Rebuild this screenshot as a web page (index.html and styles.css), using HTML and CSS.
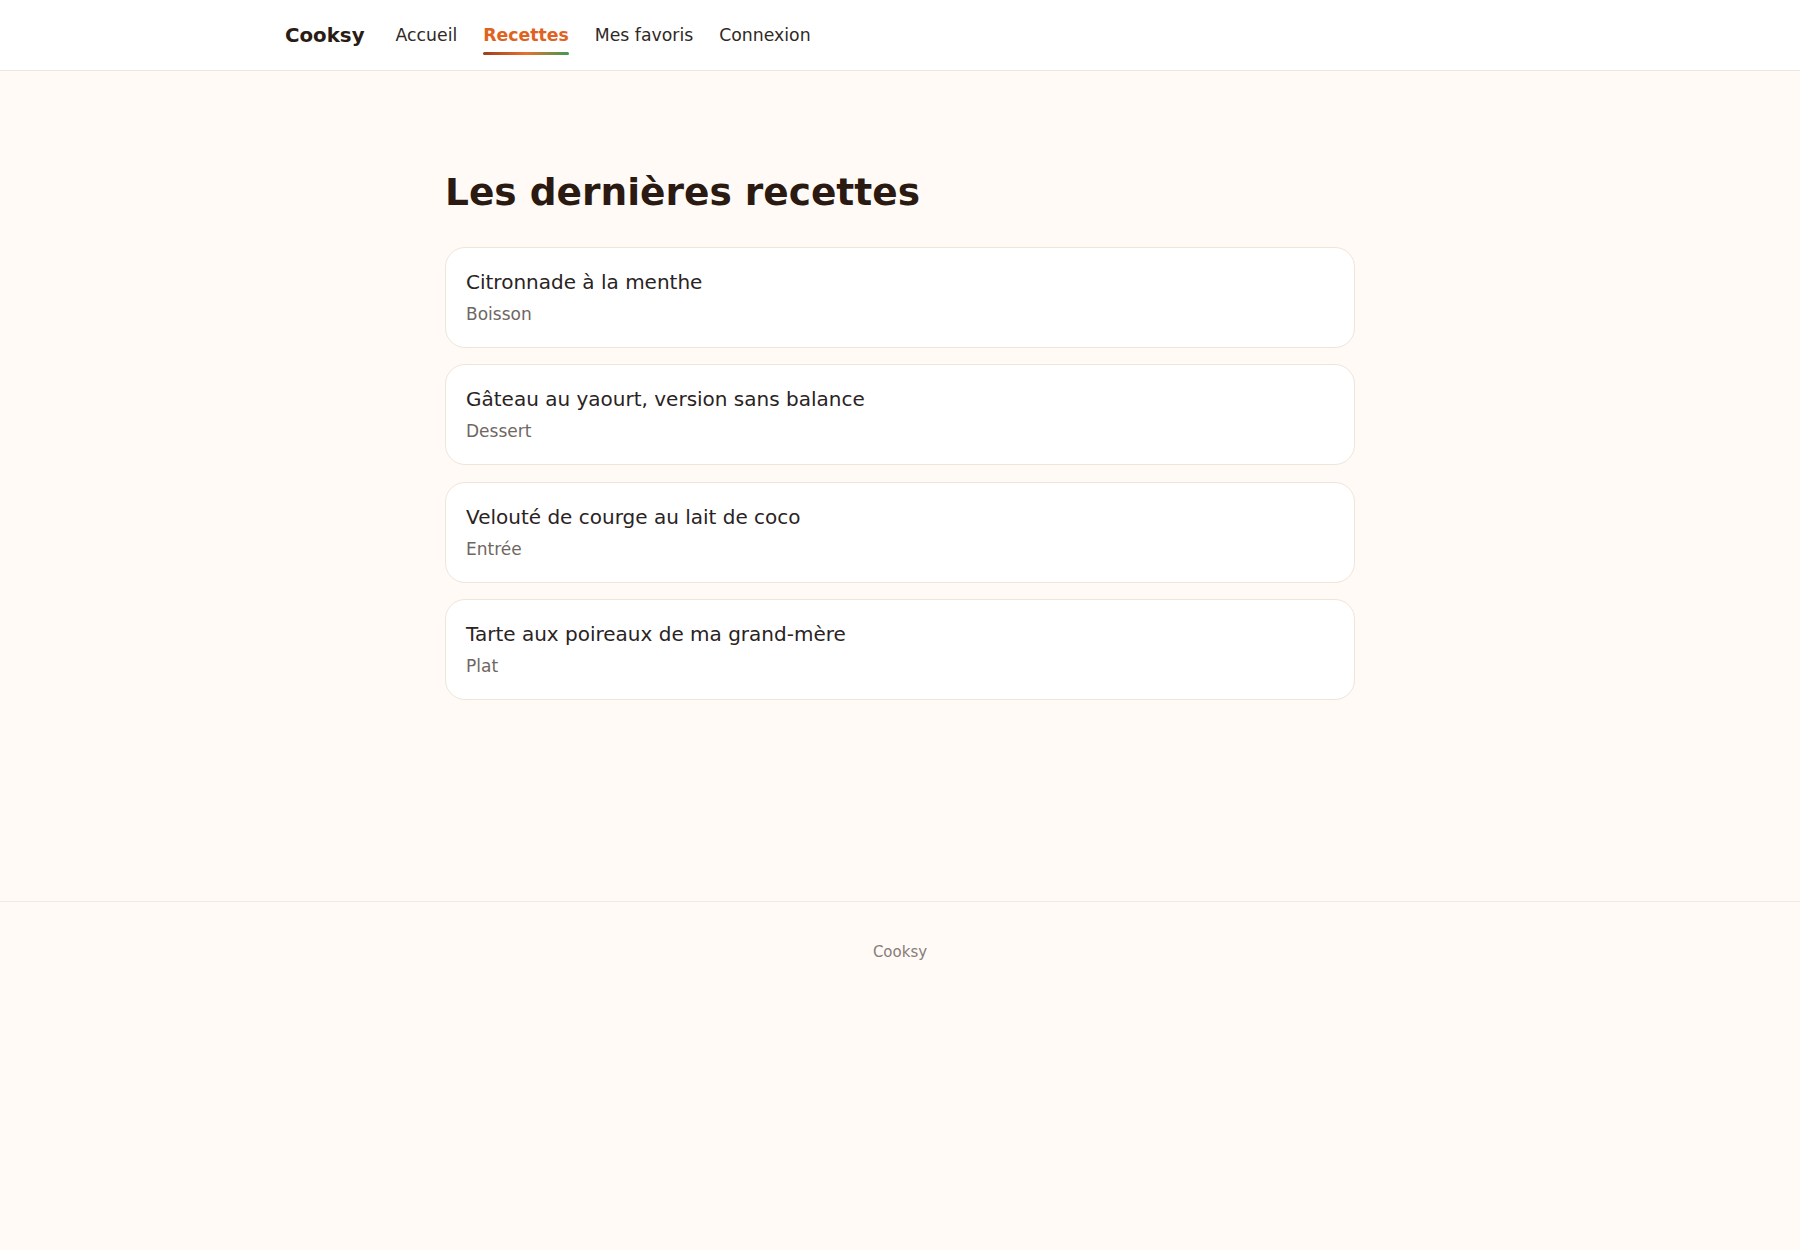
FILE: index.html
```html
<!DOCTYPE html>
<html lang="fr">
<head>
<meta charset="utf-8">
<title>Cooksy — Recettes</title>
<link rel="stylesheet" href="styles.css">
</head>
<body>
<header class="site-header">
  <div class="header-inner">
    <a class="logo" href="#">Cooksy</a>
    <nav class="nav">
      <a class="nav-link" href="#">Accueil</a>
      <a class="nav-link active" href="#">Recettes</a>
      <a class="nav-link" href="#">Mes favoris</a>
      <a class="nav-link" href="#">Connexion</a>
    </nav>
  </div>
</header>
<main class="main">
  <h1 class="page-title">Les dernières recettes</h1>
  <ul class="recipe-list">
    <li class="recipe-card">
      <div class="recipe-title">Citronnade à la menthe</div>
      <div class="recipe-cat">Boisson</div>
    </li>
    <li class="recipe-card">
      <div class="recipe-title">Gâteau au yaourt, version sans balance</div>
      <div class="recipe-cat">Dessert</div>
    </li>
    <li class="recipe-card">
      <div class="recipe-title">Velouté de courge au lait de coco</div>
      <div class="recipe-cat">Entrée</div>
    </li>
    <li class="recipe-card">
      <div class="recipe-title">Tarte aux poireaux de ma grand-mère</div>
      <div class="recipe-cat">Plat</div>
    </li>
  </ul>
</main>
<footer class="site-footer">Cooksy</footer>
</body>
</html>
```

FILE: styles.css
```css
* { box-sizing: border-box; }

html, body {
  margin: 0;
  padding: 0;
}

body {
  background: #fffaf6;
  font-family: "DejaVu Sans", "Liberation Sans", sans-serif;
  color: #2a211c;
}

.site-header {
  background: #ffffff;
  border-bottom: 1px solid #ebe6e1;
  height: 71px;
}

.header-inner {
  max-width: 1230px;
  margin: 0 auto;
  height: 70px;
  display: flex;
  align-items: center;
  gap: 31px;
}

.logo {
  font-size: 19.8px;
  font-weight: 700;
  color: #2a1c14;
  text-decoration: none;
  line-height: 24px;
  padding-top: 1px;
}

.nav {
  display: flex;
  gap: 26px;
}

.nav-link {
  position: relative;
  font-size: 17.3px;
  line-height: 24px;
  color: #2f2926;
  text-decoration: none;
}

.nav-link.active {
  color: #e0621f;
  font-weight: 700;
}

.nav-link.active::after {
  content: "";
  position: absolute;
  left: 0;
  right: 0;
  top: 29px;
  height: 3px;
  border-radius: 2px;
  background: linear-gradient(90deg, #9a3f1f 0%, #e8702a 50%, #3f9a52 100%);
}

.main {
  width: 910px;
  margin: 0 auto;
  padding: 99px 0 201px;
}

.page-title {
  margin: 0 0 33px;
  font-size: 37.5px;
  line-height: 44px;
  font-weight: 700;
  color: #2a1a12;
}

.recipe-list {
  list-style: none;
  margin: 0;
  padding: 0;
  display: flex;
  flex-direction: column;
  gap: 16.3px;
}

.recipe-card {
  background: #ffffff;
  border: 1px solid #efe5d9;
  border-radius: 20px;
  padding: 21px 20px;
}

.recipe-title {
  font-size: 20px;
  line-height: 26px;
  color: #2a231f;
}

.recipe-cat {
  margin-top: 7px;
  font-size: 17px;
  line-height: 24px;
  color: #6e6762;
}

.site-footer {
  border-top: 1px solid #f0ebe6;
  padding: 39px 0 40px;
  text-align: center;
  font-size: 15px;
  line-height: 22px;
  color: #857d78;
}
```
